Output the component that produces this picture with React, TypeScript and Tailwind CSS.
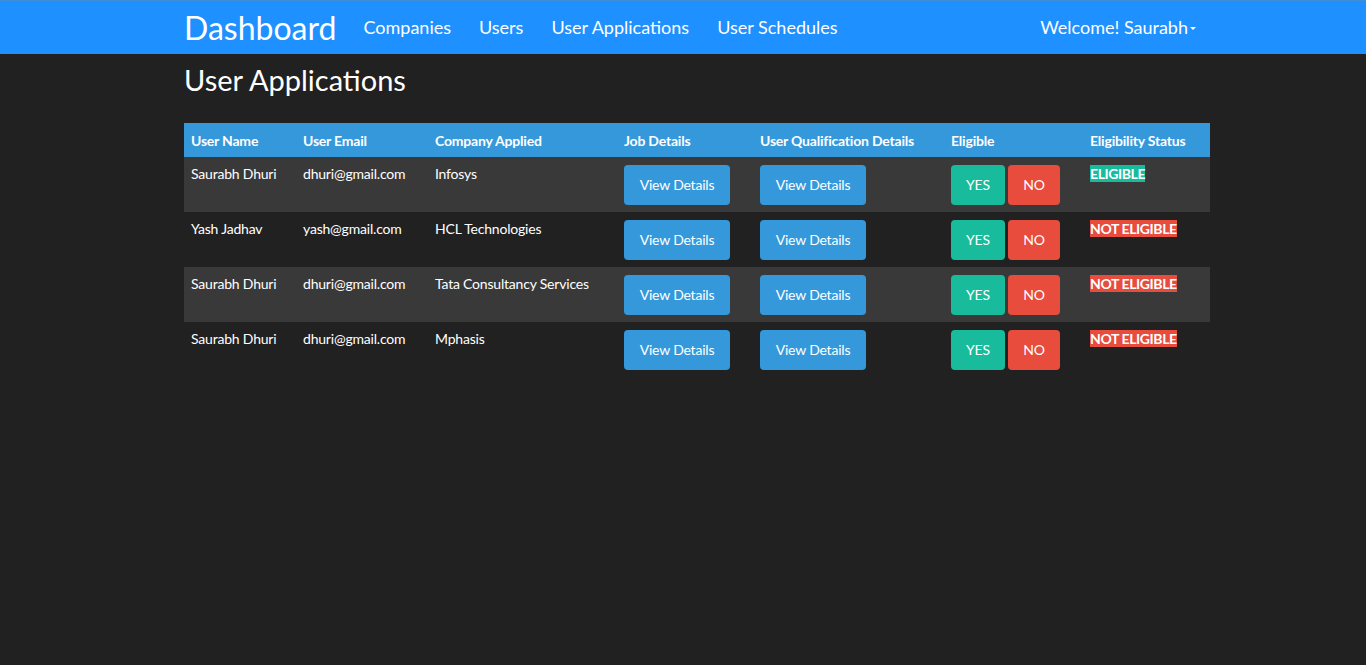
import React from "react";

interface Application {
  name: string;
  email: string;
  company: string;
  eligible: boolean;
}

const APPLICATIONS: Application[] = [
  { name: "Saurabh Dhuri", email: "dhuri@gmail.com", company: "Infosys", eligible: true },
  { name: "Yash Jadhav", email: "yash@gmail.com", company: "HCL Technologies", eligible: false },
  { name: "Saurabh Dhuri", email: "dhuri@gmail.com", company: "Tata Consultancy Services", eligible: false },
  { name: "Saurabh Dhuri", email: "dhuri@gmail.com", company: "Mphasis", eligible: false }
];

const NAV_LINKS = ["Companies", "Users", "User Applications", "User Schedules"];

function DetailsButton() {
  return (
    <button
      type="button"
      className="h-10 w-[106px] rounded-[4px] bg-[#3498db] text-[14px] tracking-[-0.2px] text-white"
    >
      View Details
    </button>
  );
}

export default function App() {
  return (
    <div className="min-h-[665px] bg-[#222122] font-['Lato',sans-serif] text-white">
      <nav className="h-[54px] border-t border-[#3e8fd8] bg-[#1e90ff]">
        <div className="ml-[184px] mr-[170px] flex h-full items-center">
          <a className="mr-[13px] text-[32px] leading-none">Dashboard</a>
          <ul className="flex">
            {NAV_LINKS.map((link) => (
              <li key={link} className="px-[14px] text-[18px]">
                {link}
              </li>
            ))}
          </ul>
          <div className="ml-auto flex items-center text-[18px]">
            Welcome! Saurabh
            <span className="ml-[2px] mt-[2px] inline-block border-x-[3px] border-t-[3px] border-x-transparent border-t-white" />
          </div>
        </div>
      </nav>

      <main className="ml-[184px] w-[1026px]">
        <h1 className="mt-[11px] text-[29px] leading-[30px]">User Applications</h1>

        <table className="mt-[28px] w-full border-collapse text-left text-[14px] tracking-[-0.2px]">
          <thead>
            <tr className="h-[34px] bg-[#3498db] font-bold">
              <th className="w-[112px] pl-[7px]">User Name</th>
              <th className="w-[132px] pl-[7px]">User Email</th>
              <th className="w-[189px] pl-[7px]">Company Applied</th>
              <th className="w-[136px] pl-[7px]">Job Details</th>
              <th className="w-[191px] pl-[7px]">User Qualification Details</th>
              <th className="w-[139px] pl-[7px]">Eligible</th>
              <th className="pl-[7px]">Eligibility Status</th>
            </tr>
          </thead>
          <tbody>
            {APPLICATIONS.map((app, i) => (
              <tr key={i} className={i % 2 === 0 ? "h-[55px] bg-[#3a393a]" : "h-[55px]"}>
                <td className="pl-[7px] pt-[6px] align-top">{app.name}</td>
                <td className="pl-[7px] pt-[6px] align-top">{app.email}</td>
                <td className="pl-[7px] pt-[6px] align-top">{app.company}</td>
                <td className="pl-[7px] align-middle">
                  <DetailsButton />
                </td>
                <td className="pl-[7px] align-middle">
                  <DetailsButton />
                </td>
                <td className="pl-[7px] align-middle">
                  <div className="flex gap-[3px]">
                    <button
                      type="button"
                      className="h-10 w-[54px] rounded-[4px] bg-[#18bc9c] text-[14px] text-white"
                    >
                      YES
                    </button>
                    <button
                      type="button"
                      className="h-10 w-[52px] rounded-[4px] bg-[#e74c3c] text-[14px] text-white"
                    >
                      NO
                    </button>
                  </div>
                </td>
                <td className="pl-[7px] pt-[6px] align-top">
                  <span
                    className={
                      app.eligible
                        ? "bg-[#18bc9c] font-bold tracking-[-0.4px]"
                        : "bg-[#e74c3c] font-bold tracking-[-0.4px]"
                    }
                  >
                    {app.eligible ? "ELIGIBLE" : "NOT ELIGIBLE"}
                  </span>
                </td>
              </tr>
            ))}
          </tbody>
        </table>
      </main>
    </div>
  );
}
